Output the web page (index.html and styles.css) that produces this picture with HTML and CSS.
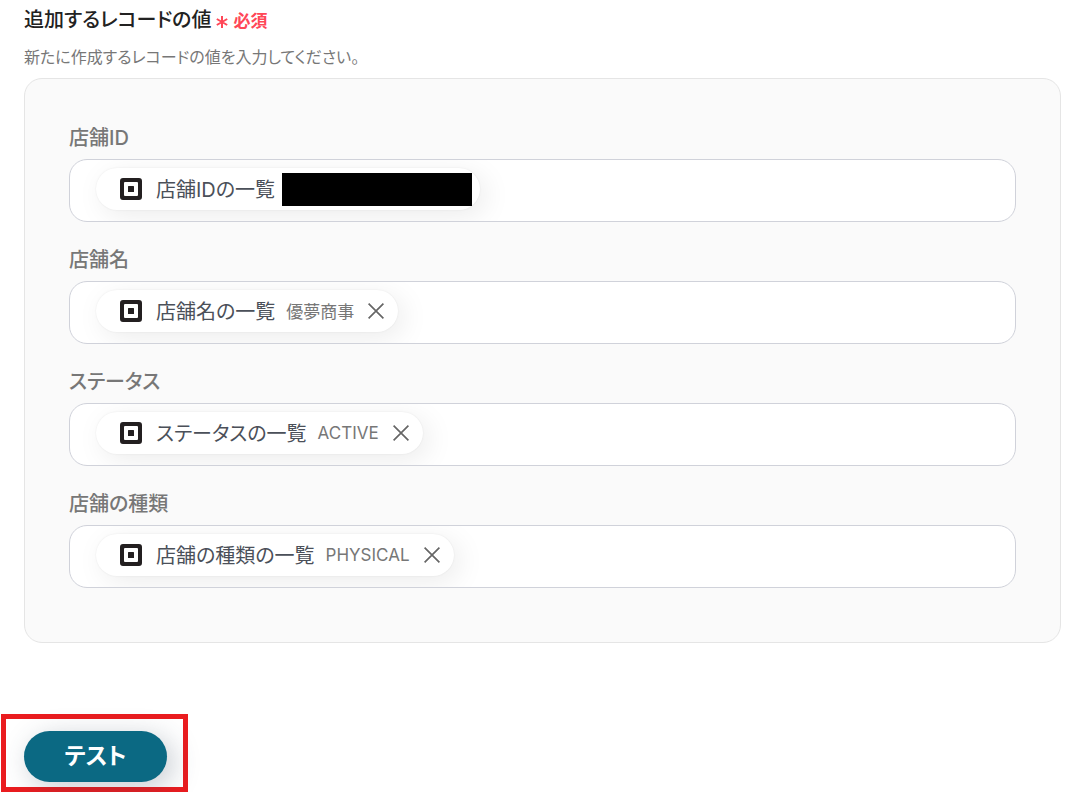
FILE: index.html
```
<!DOCTYPE html>
<html lang="ja">
<head>
    <meta charset="utf-8">
    <meta name="viewport" content="width=device-width, initial-scale=1">
    <title>レコードの追加</title>
    <link rel="stylesheet" href="styles.css">
</head>
<body>
    <svg class="sprite" width="0" height="0" aria-hidden="true">
        <symbol id="square" viewBox="0 0 22 22">
            <path fill="#231f20" fill-rule="evenodd" d="M3 0h16A3 3 0 0 1 22 3v16a3 3 0 0 1-3 3H3A3 3 0 0 1 0 19V3A3 3 0 0 1 3 0zM5 4a1 1 0 0 0-1 1v12a1 1 0 0 0 1 1h12a1 1 0 0 0 1-1V5a1 1 0 0 0-1-1z"/>
            <rect x="8" y="8" width="6" height="6" rx="0.6" fill="#231f20"/>
        </symbol>
        <symbol id="close" viewBox="0 0 16 16">
            <path d="M0.6 0.6l14.8 14.8M15.4 0.6L0.6 15.4" stroke="currentColor" stroke-width="1.7" fill="none"/>
        </symbol>
    </svg>

    <form>
        <section class="record">
            <div class="heading">
                <h1>追加するレコードの値</h1>
                <svg class="asterisk" viewBox="0 0 12 12" aria-hidden="true"><path d="M6 0v12M0.8 3l10.4 6M11.2 3L0.8 9" stroke="currentColor" stroke-width="2"/></svg>
                <span class="required">必須</span>
            </div>
            <p class="description">新たに作成するレコードの値を入力してください。</p>

            <div class="panel">
                <div class="field">
                    <label for="store-id">店舗ID</label>
                    <div class="box">
                        <span class="chip chip-masked">
                            <svg class="icon"><use href="#square"/></svg>
                            <span class="name">店舗IDの一覧</span>
                            <span class="mask"></span>
                        </span>
                        <input id="store-id" type="text">
                    </div>
                </div>
                <div class="field">
                    <label for="store-name">店舗名</label>
                    <div class="box">
                        <span class="chip">
                            <svg class="icon"><use href="#square"/></svg>
                            <span class="name">店舗名の一覧</span>
                            <span class="value">優夢商事</span>
                            <button class="remove" type="button" aria-label="削除"><svg><use href="#close"/></svg></button>
                        </span>
                        <input id="store-name" type="text">
                    </div>
                </div>
                <div class="field">
                    <label for="status">ステータス</label>
                    <div class="box">
                        <span class="chip">
                            <svg class="icon"><use href="#square"/></svg>
                            <span class="name">ステータスの一覧</span>
                            <span class="value">ACTIVE</span>
                            <button class="remove" type="button" aria-label="削除"><svg><use href="#close"/></svg></button>
                        </span>
                        <input id="status" type="text">
                    </div>
                </div>
                <div class="field">
                    <label for="store-type">店舗の種類</label>
                    <div class="box">
                        <span class="chip">
                            <svg class="icon"><use href="#square"/></svg>
                            <span class="name">店舗の種類の一覧</span>
                            <span class="value">PHYSICAL</span>
                            <button class="remove" type="button" aria-label="削除"><svg><use href="#close"/></svg></button>
                        </span>
                        <input id="store-type" type="text">
                    </div>
                </div>
            </div>
        </section>

        <div class="highlight">
            <button class="test" type="button">テスト</button>
        </div>
    </form>
</body>
</html>
```
FILE: styles.css
```
* {
    box-sizing: border-box;
}
body {
    margin: 0;
    background: #fff;
    color: #222;
    font-family: Inter, "Noto Sans CJK JP", sans-serif;
    font-feature-settings: "palt";
}
button, input {
    font: inherit;
    font-feature-settings: inherit;
}
.sprite {
    position: absolute;
}

.record {
    padding: 4px 23px 0 24px;
}
.heading {
    display: flex;
    align-items: center;
    gap: 5px;
    height: 32px;
}
h1 {
    margin: 0;
    font-size: 20px;
    font-weight: 500;
    line-height: 32px;
}
.asterisk {
    width: 12px;
    height: 12px;
    margin-top: 4px;
    color: #ff4757;
}
.required {
    padding-bottom: 2px;
    color: #ff4757;
    font-size: 17px;
    font-weight: 700;
}
.description {
    margin: 8px 0;
    color: #777;
    font-size: 16px;
    line-height: 26px;
}

.panel {
    display: flex;
    flex-direction: column;
    gap: 22px;
    padding: 43px 44px 54px;
    border: 1px solid #e5e5e5;
    border-radius: 18px;
    background: #fafafa;
}
.field {
    display: flex;
    flex-direction: column;
    gap: 5px;
}
label {
    color: #777;
    font-size: 20px;
    font-weight: 500;
    line-height: 32px;
}
.box {
    display: flex;
    align-items: center;
    height: 63px;
    padding: 0 26px 3px;
    border: 1px solid #d0d2da;
    border-radius: 18px;
    background: #fff;
    overflow: hidden;
}
.box input {
    flex: 1;
    min-width: 0;
    border: 0;
    outline: 0;
    background: none;
}

.chip {
    display: flex;
    align-items: center;
    height: 42px;
    padding: 0 14px 0 24px;
    border-radius: 21px;
    background: #fff;
    box-shadow: 0 0 2px rgba(0, 0, 0, 0.08), 6px 6px 28px rgba(0, 0, 0, 0.08);
    white-space: nowrap;
}
.chip-masked {
    padding-right: 8px;
}
.icon {
    width: 22px;
    height: 22px;
    margin-right: 14px;
}
.name {
    padding-bottom: 2px;
    color: #4b5059;
    font-size: 20px;
}
.value {
    margin-left: 11px;
    padding-bottom: 1px;
    color: #777;
    font-size: 17px;
}
.mask {
    width: 190px;
    height: 33px;
    margin-left: 7px;
    background: #000;
}
.remove {
    display: flex;
    margin-left: 14px;
    padding: 0;
    border: 0;
    background: none;
    color: #666;
    cursor: pointer;
}
.remove svg {
    width: 16px;
    height: 16px;
}

.highlight {
    width: fit-content;
    margin: 71px 0 0 1px;
    padding: 12px 16px 5px 18px;
    border: 5px solid #ea1c1f;
}
.test {
    display: block;
    width: 143px;
    height: 51px;
    padding: 0 0 5px;
    border: 0;
    border-radius: 26px;
    background: #0b6983;
    box-shadow: 6px 6px 28px rgba(50, 70, 90, 0.28);
    color: #fff;
    font-size: 23px;
    font-weight: 700;
    cursor: pointer;
}
```
